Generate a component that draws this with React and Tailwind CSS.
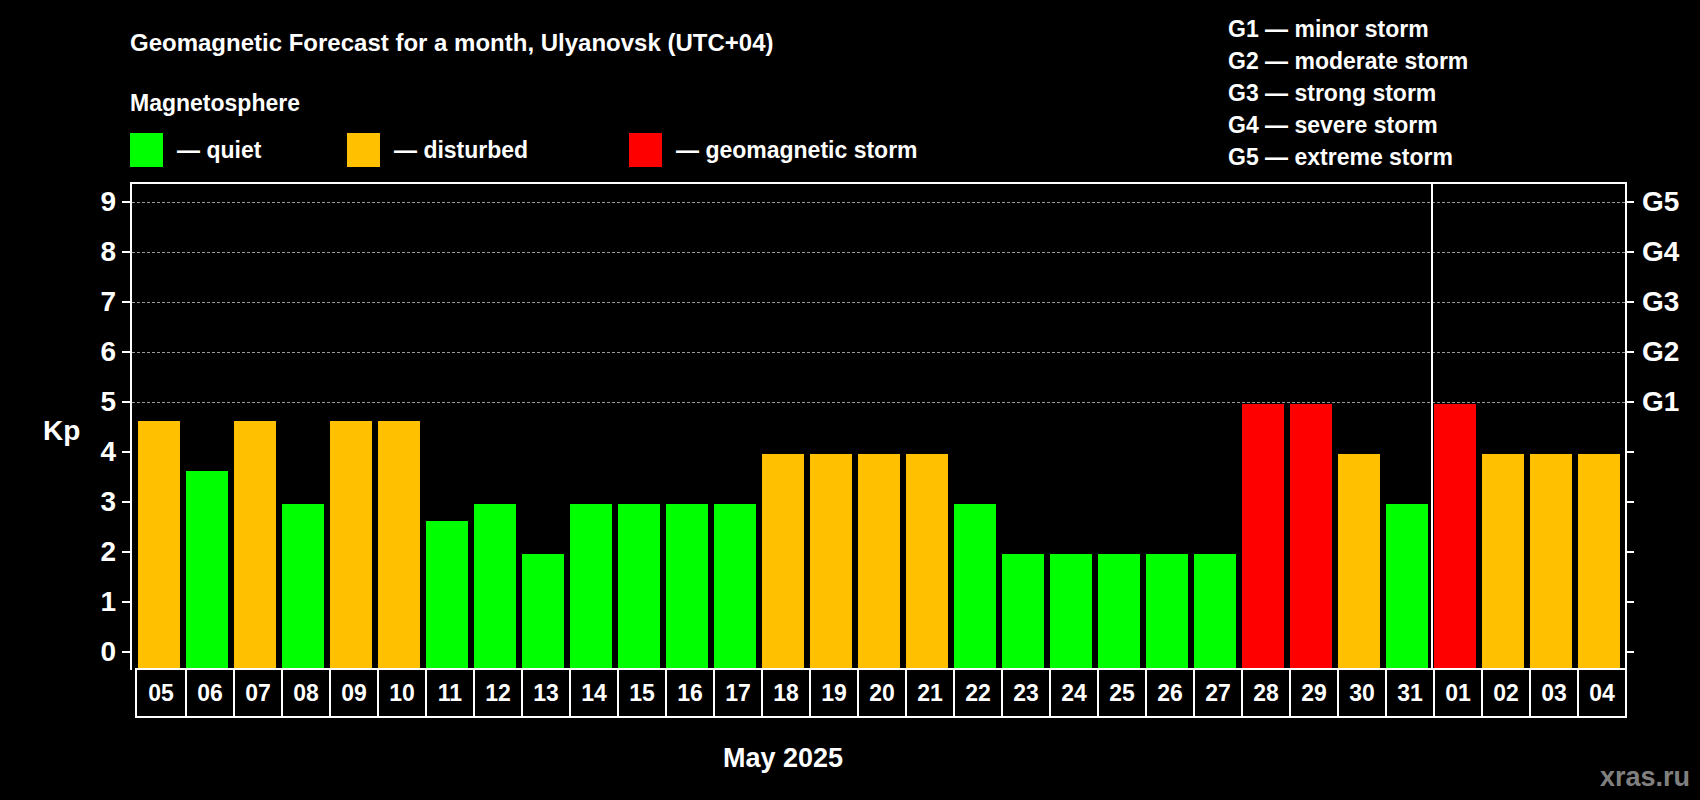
const vals=[4.67,3.67,4.67,3,4.67,4.67,2.67,3,2,3,3,3,3,4,4,4,4,3,2,2,2,2,2,5,5,4,3,5,4,4,4];
const days=["05","06","07","08","09","10","11","12","13","14","15","16","17","18","19","20","21","22","23","24","25","26","27","28","29","30","31","01","02","03","04"];
const col=v=>v>=5?"#ff0000":v>=4?"#ffc000":"#00ff00";
const F={fontFamily:'"Liberation Sans", Arial, sans-serif'};
export default function App(){
  return(
  <div className="w-[1700px] h-[800px] bg-black text-white font-bold relative overflow-hidden" style={F}>
    <div className="absolute left-[130px] top-[25px] text-[24px]">Geomagnetic Forecast for a month, Ulyanovsk (UTC+04)</div>
    <div className="absolute left-[130px] top-[86px] text-[23px]">Magnetosphere</div>
    <div className="absolute left-[130px] top-[133px] flex items-center text-[23px]">
      <div className="w-[33px] h-[34px] bg-[#00ff00]"/><span className="ml-[14px] w-[170px]">— quiet</span>
      <div className="w-[33px] h-[34px] bg-[#ffc000]"/><span className="ml-[14px] w-[235px]">— disturbed</span>
      <div className="w-[33px] h-[34px] bg-[#ff0000]"/><span className="ml-[14px]">— geomagnetic storm</span>
    </div>
    <div className="absolute left-[1228px] top-[13px] flex flex-col text-[23px] leading-[32px]">
      <div>G1 — minor storm</div><div>G2 — moderate storm</div><div>G3 — strong storm</div><div>G4 — severe storm</div><div>G5 — extreme storm</div>
    </div>
    <div className="absolute left-[43px] top-[410px] text-[28px]">Kp</div>
    {[0,1,2,3,4,5,6,7,8,9].map(k=>(
      <div key={k}>
        <div className="absolute left-[80px] w-[36px] text-right text-[28px] leading-[32px]" style={{top:652-50*k-16}}>{k}</div>
        <div className="absolute left-[122px] w-[9px] h-[2px] bg-white" style={{top:651-50*k}}/>
        <div className="absolute left-[1625px] w-[9px] h-[2px] bg-white" style={{top:651-50*k}}/>
        {k>=5&&<div className="absolute left-[1642px] text-[28px] leading-[32px]" style={{top:652-50*k-16}}>G{k-4}</div>}
      </div>
    ))}
    <div className="absolute left-[130px] top-[182px] w-[1497px] h-[488px] border-2 border-white border-b-0">
      {[5,6,7,8,9].map(k=>(<div key={k} className="absolute left-0 right-0 border-t border-dashed border-[#9a9a9a]" style={{top:652-50*k-184}}/>))}
      <div className="absolute left-[1299px] top-0 bottom-0 w-[2px] bg-white"/>
      {vals.map((v,i)=>(<div key={i} className="absolute bottom-0 w-[42px]" style={{left:6+48*i,height:16+50*v,background:col(v)}}/>))}
    </div>
    <div className="absolute left-[135px] top-[668px] flex border-2 border-white">
      {days.map((d,i)=>(<div key={i} className={"w-[48px] h-[46px] flex items-center justify-center text-[23px] "+(i?"border-l-2 border-white":"")}>{d}</div>))}
    </div>
    <div className="absolute left-0 w-[1566px] top-[738px] text-center text-[27px]">May 2025</div>
    <div className="absolute right-[10px] top-[757px] text-[27px] text-[#808080]">xras.ru</div>
  </div>);
}
